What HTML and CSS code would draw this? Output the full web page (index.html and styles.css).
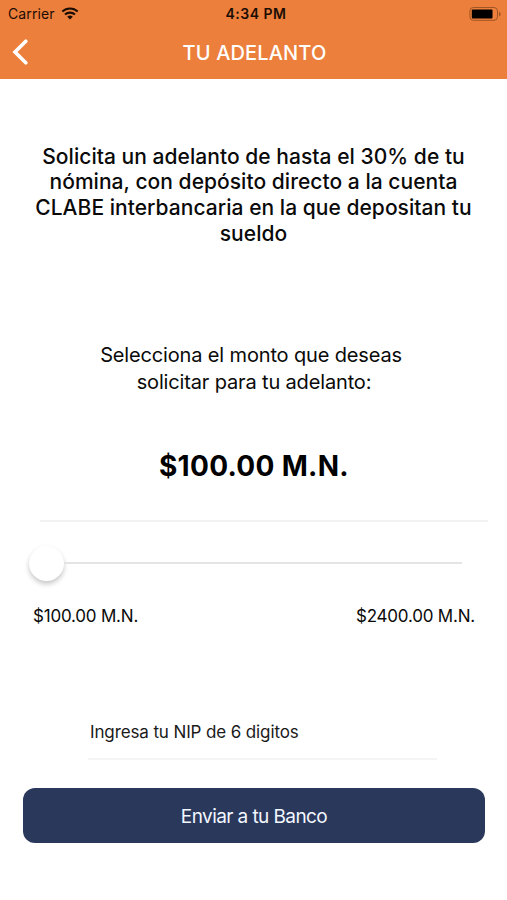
FILE: index.html
```html
<!DOCTYPE html>
<html lang="es">

<head>
    <meta charset="UTF-8">
    <meta name="viewport" content="width=device-width, initial-scale=1.0">
    <title>Tu Adelanto</title>

    <link rel="stylesheet" href="styles.css">
</head>

<body>

    <header class="header">
        <div class="status">
            <div class="carrier">
                <span>Carrier</span>
                <svg class="wifi" width="18" height="13" viewBox="0 0 18 13">
                    <path d="M1.3 4.5a11.2 11.2 0 0 1 15.4 0M4 7.6a7.2 7.2 0 0 1 10 0" fill="none" stroke="#1c0d04" stroke-width="2.1" />
                    <path d="M6.2 9.8a4.3 4.3 0 0 1 5.6 0L9 12.6z" fill="#1c0d04" />
                </svg>
            </div>
            <span class="time">4:34 PM</span>
            <svg class="battery" width="33" height="14" viewBox="0 0 33 14">
                <rect x=".9" y=".5" width="27.6" height="12.8" rx="3.5" fill="none" stroke="#a05525" />
                <rect x="2.8" y="2.5" width="20.7" height="9" rx="1" fill="#000" />
                <path d="M30 4.7c2.2.8 2.2 3.8 0 4.6z" fill="#a05525" />
            </svg>
        </div>
        <div class="navbar">
            <svg class="back" width="16" height="26" viewBox="0 0 16 26">
                <path d="M13.8 2.2L3 13l10.8 10.8" fill="none" stroke="#fff" stroke-width="3.6" stroke-linecap="round" />
            </svg>
            <h1 class="title">TU ADELANTO</h1>
        </div>
    </header>

    <main class="content">
        <p class="intro">
            Solicita un adelanto de hasta el 30% de tu<br>
            nómina, con depósito directo a la cuenta<br>
            CLABE interbancaria en la que depositan tu<br>
            sueldo
        </p>

        <p class="hint">
            Selecciona el monto que deseas<br>
            <span class="hint-end">solicitar para tu adelanto:</span>
        </p>

        <div class="amount">$100.00 M.N.</div>

        <div class="slider">
            <div class="thumb"></div>
            <div class="track"></div>
        </div>

        <div class="limits">
            <span>$100.00 M.N.</span>
            <span>$2400.00 M.N.</span>
        </div>

        <input type="text" class="nip" placeholder="Ingresa tu NIP de 6 digitos">

        <button class="send">Enviar a tu Banco</button>
    </main>

</body>

</html>
```
FILE: styles.css
```css
* {
    box-sizing: border-box;
}

body {
    margin: 0;
    background-color: #fff;
    color: #0a0a0a;
    font-family: Inter, "Liberation Sans", sans-serif;
}

.header {
    height: 79px;
    background-color: #ec7f3b;
}

.status {
    display: grid;
    grid-template-columns: 1fr auto 1fr;
    align-items: center;
    height: 27px;
    padding: 0 5px 0 8px;
    color: #1c0d04;
}

.carrier {
    display: flex;
    align-items: center;
    gap: 6px;
    font-size: 14px;
    letter-spacing: 0.1px;
}

.time {
    padding-left: 2px;
    font-size: 14px;
    font-weight: 600;
    letter-spacing: 0.5px;
}

.battery {
    justify-self: end;
}

.navbar {
    display: grid;
    grid-template-columns: 40px 1fr 38px;
    align-items: center;
    height: 51px;
}

.back {
    margin: 0 0 2px 12px;
}

.title {
    margin: 0;
    color: #fff;
    font-size: 20px;
    font-weight: 500;
    letter-spacing: 0.15px;
    text-align: center;
}

.content {
    display: flex;
    flex-direction: column;
}

.intro {
    margin: 64.5px 0 0;
    font-size: 21px;
    font-weight: 500;
    letter-spacing: 0.04px;
    line-height: 25.7px;
    text-align: center;
    white-space: nowrap;
}

.hint {
    margin: 96px 0 0;
    padding-right: 5px;
    font-size: 20px;
    letter-spacing: -0.15px;
    line-height: 27px;
    text-align: center;
}

.hint-end {
    padding-left: 6px;
}

.amount {
    height: 76px;
    margin: 50px 19px 0 40px;
    padding-right: 20px;
    border-bottom: 2px solid #f2f2f2;
    color: #000;
    font-size: 28px;
    font-weight: 700;
    letter-spacing: 0.3px;
    line-height: 40px;
    text-align: center;
}

.slider {
    display: flex;
    align-items: center;
    height: 36px;
    margin: 23px 45px 0 29px;
}

.thumb {
    width: 35px;
    height: 35px;
    border-radius: 50%;
    background-color: #fff;
    box-shadow: 0 3px 5px rgba(0, 0, 0, 0.22);
}

.track {
    flex: 1;
    height: 2px;
    background-color: #e4e4e4;
}

.limits {
    display: flex;
    justify-content: space-between;
    margin: 23px 32px 0 33px;
    font-size: 17px;
    letter-spacing: -0.2px;
    line-height: 24px;
}

.nip {
    height: 54px;
    margin: 78px 70px 0 88px;
    padding: 0 2px;
    border: 0;
    border-bottom: 2px solid #f4f4f4;
    font-family: inherit;
    font-size: 17px;
    letter-spacing: -0.12px;
    outline: none;
}

.nip::placeholder {
    color: #1a1a1a;
    opacity: 1;
}

.send {
    height: 55px;
    margin: 28px 22px 0 23px;
    padding-top: 3px;
    border: 0;
    border-radius: 12px;
    background-color: #2a385c;
    color: #f2f7ff;
    font-family: inherit;
    font-size: 19px;
    letter-spacing: -0.58px;
}
```
